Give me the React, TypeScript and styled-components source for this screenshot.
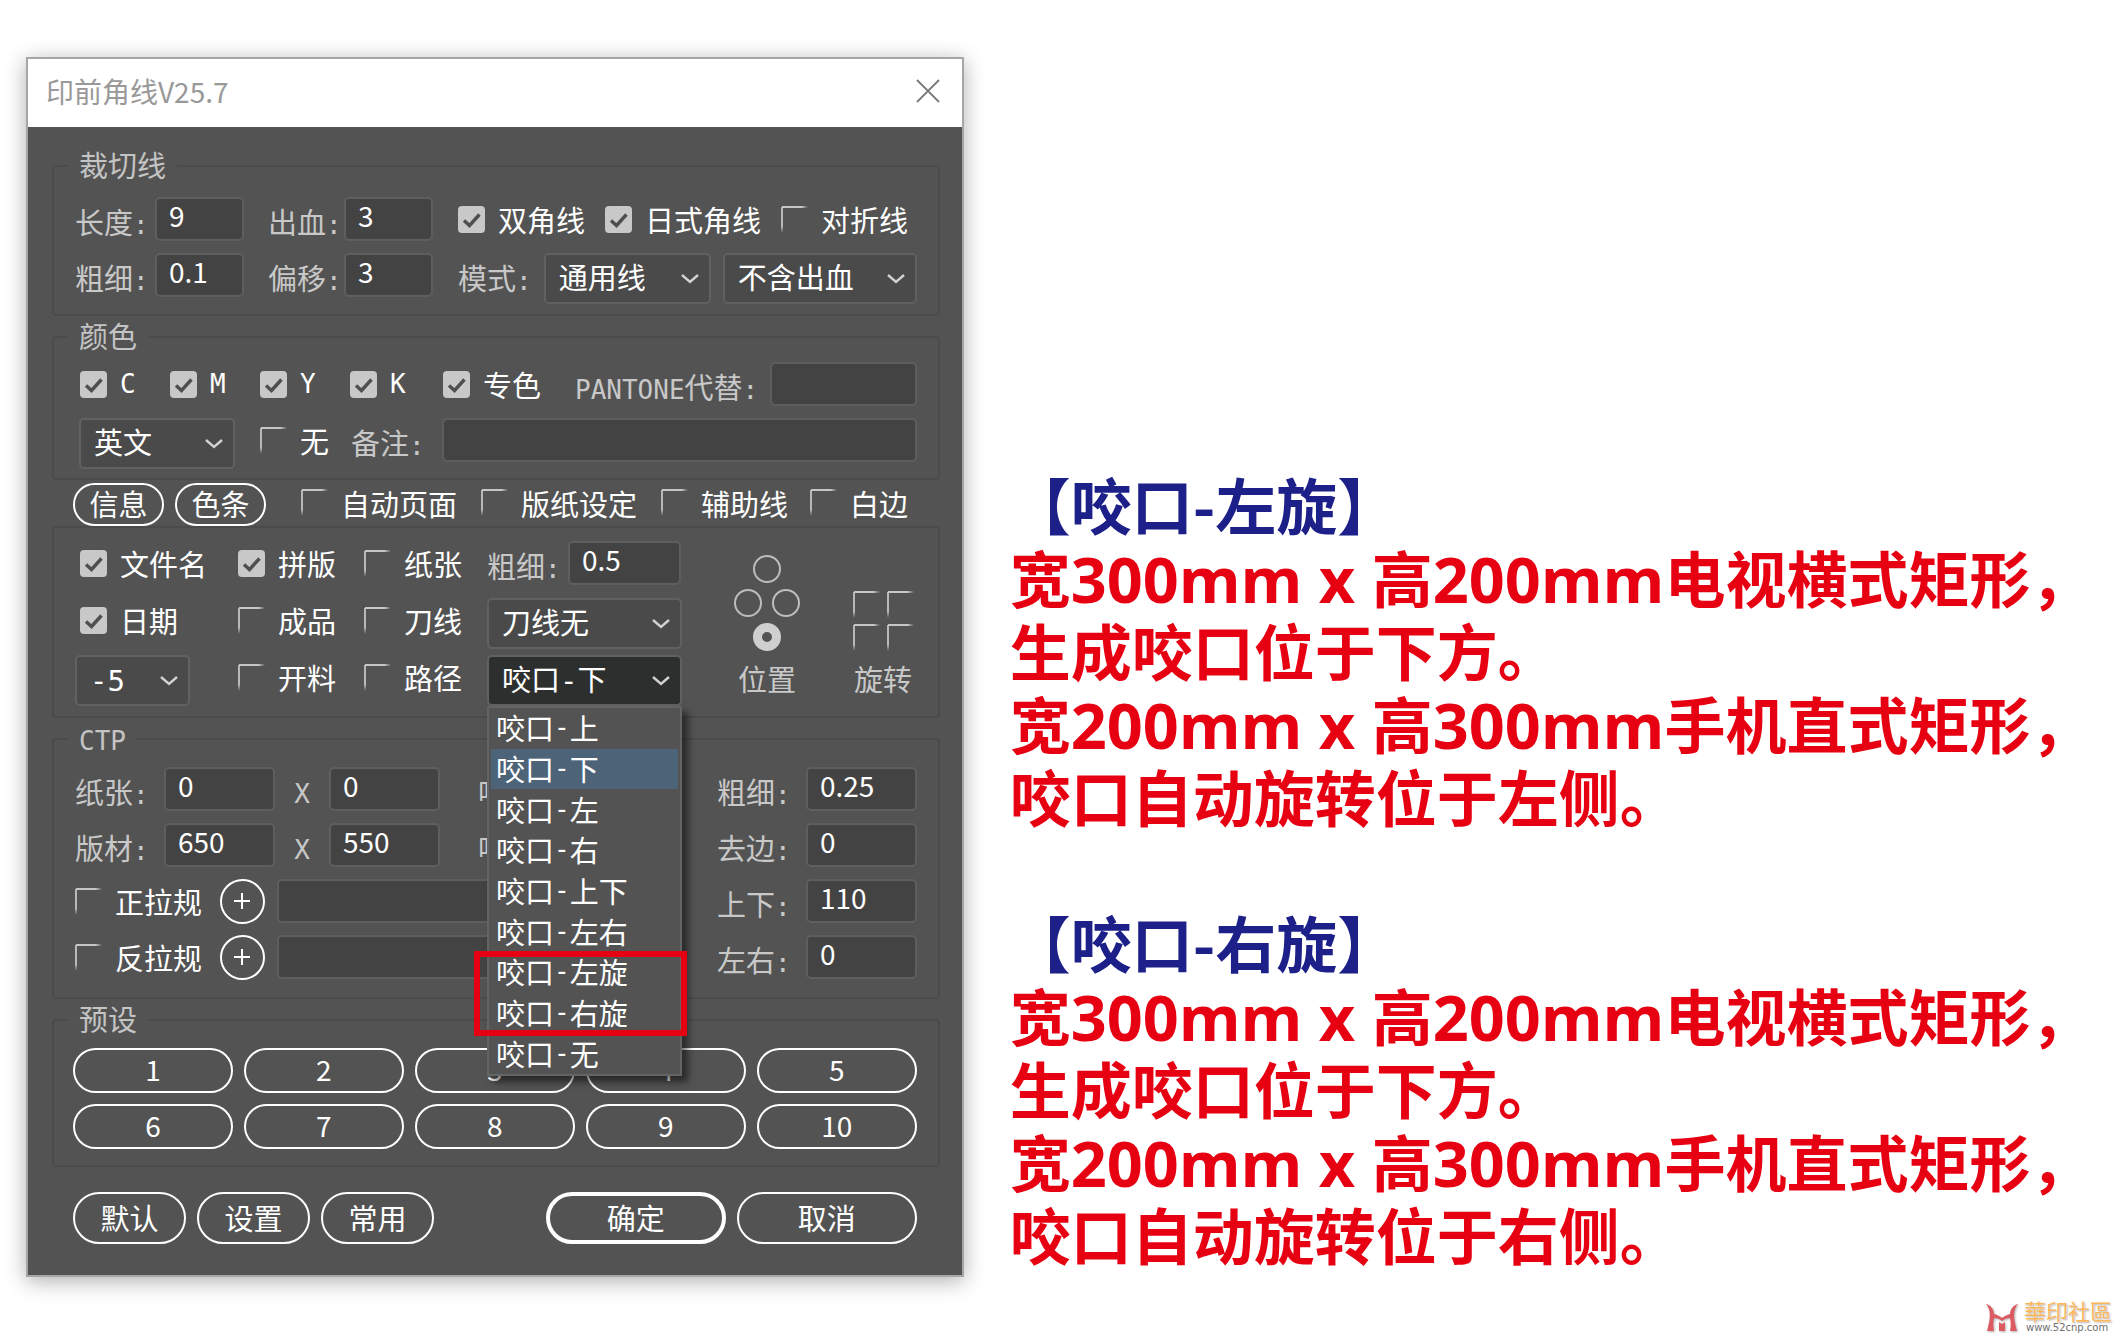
import React, { useId } from "react";
import styled, { createGlobalStyle, css } from "styled-components";

const cjk = `"Noto Sans CJK SC", "Noto Sans CJK TC", sans-serif`;
const monoCjk = `"DejaVu Sans Mono", "Noto Sans CJK SC", monospace`;

const GlobalStyle = createGlobalStyle`
  *, *::before, *::after { box-sizing: border-box; }
  body { margin: 0; background: #fff; }
  button, input, select { font: inherit; color: inherit; margin: 0; outline: none; }
`;

/* ---------- page ---------- */

const Page = styled.main`
  position: relative;
  display: flex;
  align-items: flex-start;
  gap: 46px;
  min-height: 100vh;
  padding: 57px 26px 0;
  font-family: ${cjk};
  overflow: hidden;
`;

const Dialog = styled.form`
  flex: 0 1 940px;
  border: 2px solid #a6a6a6;
  background: #535353;
  color: #fff;
  font-size: 29px;
  box-shadow: 0 4px 20px rgba(0, 0, 0, 0.32);
`;

const TitleBar = styled.header`
  display: flex;
  align-items: center;
  justify-content: space-between;
  height: 68px;
  padding: 0 22px 4px 18px;
  background: #fff;
  color: #999;
`;

const Title = styled.h1`
  margin: 0;
  font-size: 28px;
  font-weight: 400;
  line-height: 40px;
`;

const CloseButton = styled.button`
  display: grid;
  padding: 0;
  border: 0;
  background: none;
  color: #7a7a7a;
`;

const Body = styled.div`
  display: flex;
  flex-direction: column;
  padding: 24px 22px 31px 24px;
`;

/* ---------- groups and rows ---------- */

const Group = styled.fieldset<{ $top: number; $bottom: number; $gap?: number }>`
  min-width: 0;
  margin: 0 0 ${(p) => p.$gap ?? 6}px;
  padding: ${(p) => p.$top}px 21px ${(p) => p.$bottom}px 19px;
  border: 2px solid #4b4b4b;
  border-radius: 4px;
`;

const Legend = styled.legend`
  height: 30px;
  margin-left: -5px;
  padding: 0 11px;
  color: #c4c4c4;
  line-height: 26px;
`;

const Row = styled.div<{ $cols: string; $indent?: number }>`
  display: grid;
  grid-template-columns: ${(p) => p.$cols};
  align-items: start;
  height: 56px;
  padding-left: ${(p) => p.$indent ?? 2}px;
`;

const Inline = styled.div<{ $gap: number }>`
  display: flex;
  gap: ${(p) => p.$gap}px;
`;

const Caption = styled.label`
  height: 50px;
  color: #c8c8c8;
  line-height: 49px;
  white-space: nowrap;
`;

const Latin = styled.span`
  font-family: ${monoCjk};
  font-size: 26px;
  line-height: 1;
`;

const Times = styled(Latin)`
  color: #c8c8c8;
  line-height: 54px;
  text-align: center;
`;

/* ---------- controls ---------- */

const TextBox = styled.input`
  width: 100%;
  min-width: 0;
  height: 44px;
  padding: 0 12px 8px;
  border: 2px solid #5c5f5d;
  border-radius: 5px;
  background: #434343;
  font-size: 28px;
`;

const SelectWrap = styled.div<{ $width?: number }>`
  position: relative;
  display: grid;
  grid-template-columns: 1fr;
  align-items: center;
  width: ${(p) => (p.$width ? `${p.$width}px` : "100%")};

  > svg {
    grid-area: 1 / 1;
    justify-self: end;
    margin-right: 10px;
    pointer-events: none;
  }
`;

const SelectBox = styled.select<{ $open?: boolean }>`
  grid-area: 1 / 1;
  appearance: none;
  width: 100%;
  height: 51px;
  padding: 0 36px 0 13px;
  border: 2px solid #5f6260;
  border-radius: 5px;
  background: ${(p) => (p.$open ? "#2d2f2e" : "#4a4a4a")};
  font-family: ${monoCjk};
`;

const CheckLabel = styled.label`
  display: flex;
  align-items: center;
  gap: 13px;
  height: 44px;
  line-height: 30px;
  white-space: nowrap;
`;

const CheckCell = styled.span`
  display: grid;
  width: 27px;
  height: 27px;

  > * {
    grid-area: 1 / 1;
  }
  > svg {
    pointer-events: none;
  }
`;

const CheckInput = styled.input`
  appearance: none;
  width: 27px;
  height: 27px;
  background:
    linear-gradient(to right, #c6c6c6 75%, transparent) 1px 0 / 26px 2px no-repeat,
    linear-gradient(to bottom, #b8b8b8 75%, transparent) 0 1px / 2px 26px no-repeat;

  &:checked {
    border-radius: 4px;
    background: #c8c8c8;
  }
`;

const RadioInput = styled.input`
  appearance: none;
  width: 28px;
  height: 28px;
  border: 2px solid #bdbdbd;
  border-radius: 50%;

  &:checked {
    border: 9px solid #cfcfcf;
  }
`;

const PillButton = styled.button<{ $h: number; $w?: number; $strong?: boolean }>`
  display: flex;
  align-items: center;
  justify-content: center;
  width: ${(p) => (p.$w ? `${p.$w}px` : "100%")};
  height: ${(p) => p.$h}px;
  padding: 0 0 3px;
  border: ${(p) => (p.$strong ? 4 : 2)}px solid #fff;
  border-radius: 26px;
  background: none;
  line-height: 30px;
`;

const RoundButton = styled(PillButton)`
  padding: 0;
`;

/* ---------- option list ---------- */

const OptionList = styled.ul`
  position: absolute;
  z-index: 2;
  top: 100%;
  left: 0;
  display: flex;
  flex-direction: column;
  width: 100%;
  height: 370px;
  margin: 0;
  padding: 0;
  list-style: none;
  border: 2px solid #626564;
  background: #535353;
  box-shadow: 6px 6px 7px rgba(0, 0, 0, 0.5);
`;

const Option = styled.li<{ $active: boolean }>`
  flex: 1;
  display: flex;
  align-items: center;
  margin: 0 2px;
  padding: 0 0 2px 5px;
  line-height: 30px;
  ${(p) =>
    p.$active &&
    css`
      background: #4d6378;
    `}
`;

const Highlight = styled.li`
  position: absolute;
  top: 243px;
  left: -15px;
  width: 213px;
  height: 85px;
  border: 6px solid #e60012;
  pointer-events: none;
`;

/* ---------- layout parts ---------- */

const ToolRow = styled.div`
  display: grid;
  grid-template-columns: 102px 126px 180px 180px 149px 1fr;
  align-items: start;
  height: 43px;
  padding-left: 21px;

  > label {
    height: 39px;
  }
`;

const MarkLayout = styled.div`
  display: grid;
  grid-template-columns: 608px 172px 60px;
`;

const MarkRows = styled.div`
  display: grid;
  gap: 1px;
`;

const Cluster = styled.div`
  display: flex;
  flex-direction: column;
  align-items: center;
  justify-content: flex-end;
  gap: 6px;
  padding-bottom: 6px;
`;

const ClusterTitle = styled.span`
  margin-top: -6px;
  color: #c8c8c8;
  line-height: 54px;
`;

const Presets = styled.div`
  display: grid;
  grid-template-columns: repeat(5, 1fr);
  gap: 11px;
  font-size: 28px;
`;

const Footer = styled.footer`
  display: flex;
  gap: 11px;
  margin-top: 19px;
  padding: 0 23px 0 21px;
`;

const Spacer = styled.span`
  flex: 1;
`;

/* ---------- notes ---------- */

const Notes = styled.section`
  flex: 1;
  display: grid;
  gap: 73px;
  padding-top: 410px;
  font-size: 61px;
  font-weight: 700;
  line-height: 73px;
  white-space: nowrap;
`;

const NoteTitle = styled.h2`
  margin: 0;
  color: #1d2088;
  font-size: 61px;
  line-height: 73px;
`;

const NoteLine = styled.p`
  height: 73px;
  margin: 0;
  color: #e60012;
`;

const NoteLatin = styled.span`
  font-family: "Open Sans", "Noto Sans", sans-serif;
  font-size: 63px;
  line-height: 1;
`;

/* ---------- site mark ---------- */

const SiteMark = styled.a`
  position: absolute;
  right: 2px;
  bottom: 1px;
  display: flex;
  align-items: flex-end;
  gap: 3px;
  text-decoration: none;

  > svg {
    filter: drop-shadow(1px 1px 1px rgba(0, 0, 0, 0.3));
  }
`;

const SiteText = styled.span`
  display: grid;
`;

const SiteName = styled.span`
  color: #f9b65a;
  font-family: "Noto Sans CJK TC", sans-serif;
  font-size: 22px;
  line-height: 23px;
  text-shadow: 0 0 1px #fff, 1px 1px 2px rgba(0, 0, 0, 0.35);
`;

const SiteUrl = styled.span`
  padding-left: 2px;
  color: #6f6f6f;
  font-family: "DejaVu Sans", sans-serif;
  font-size: 10px;
  line-height: 12px;
`;

/* ---------- small components ---------- */

function Chevron() {
  return (
    <svg width="22" height="14" viewBox="0 0 22 14" fill="none" stroke="#d2d2d2" strokeWidth="2.4">
      <path d="M3 3 L11 10 L19 3" />
    </svg>
  );
}

function Plus() {
  return (
    <svg width="17" height="17" viewBox="0 0 17 17" stroke="#fff" strokeWidth="2">
      <path d="M8 0 V16 M0 8 H16" />
    </svg>
  );
}

function Check({ text, latin, checked }: { text: string; latin?: boolean; checked?: boolean }) {
  return (
    <CheckLabel>
      <CheckCell>
        <CheckInput type="checkbox" defaultChecked={checked} />
        {checked && (
          <svg width="27" height="27" viewBox="0 0 27 27" fill="none" stroke="#4f4f4f" strokeWidth="3.4">
            <path d="M6 14.5 L11.5 19.5 L21.5 8.5" />
          </svg>
        )}
      </CheckCell>
      {latin ? <Latin>{text}</Latin> : text}
    </CheckLabel>
  );
}

function Field({ text, latin, value = "" }: { text: string; latin?: string; value?: string }) {
  const id = useId();
  return (
    <>
      <Caption htmlFor={id}>
        {latin && <Latin>{latin}</Latin>}
        {text}
        <Latin>:</Latin>
      </Caption>
      <TextBox id={id} type="text" defaultValue={value} />
    </>
  );
}

function Select({
  name,
  options,
  width,
  open,
  id,
  children,
}: {
  name: string;
  options: string[];
  width?: number;
  open?: boolean;
  id?: string;
  children?: React.ReactNode;
}) {
  return (
    <SelectWrap $width={width}>
      <SelectBox id={id} aria-label={name} $open={open}>
        {options.map((o) => (
          <option key={o}>{o}</option>
        ))}
      </SelectBox>
      <Chevron />
      {children}
    </SelectWrap>
  );
}

const grips = ["上", "下", "左", "右", "上下", "左右", "左旋", "右旋", "无"];

function GripSelect() {
  return (
    <Select name="咬口" options={["咬口-下"]} width={195} open>
      <OptionList role="listbox" aria-label="咬口">
        {grips.map((g) => (
          <Option key={g} role="option" aria-selected={g === "下"} $active={g === "下"}>
            咬口<Latin>-</Latin>
            {g}
          </Option>
        ))}
        <Highlight role="presentation" />
      </OptionList>
    </Select>
  );
}

function Note({ turn, side }: { turn: string; side: string }) {
  return (
    <div>
      <NoteTitle>【咬口-{turn}】</NoteTitle>
      <NoteLine>
        宽<NoteLatin>300mm x </NoteLatin>高<NoteLatin>200mm</NoteLatin>电视横式矩形，
      </NoteLine>
      <NoteLine>生成咬口位于下方。</NoteLine>
      <NoteLine>
        宽<NoteLatin>200mm x </NoteLatin>高<NoteLatin>300mm</NoteLatin>手机直式矩形，
      </NoteLine>
      <NoteLine>咬口自动旋转位于{side}侧。</NoteLine>
    </div>
  );
}

const cutCols = "80px 89px 24px 76px 89px 25px 1fr";
const plateCols = "89px 111px 54px 111px 38px 67px 110px 62px 89px 1fr";
const gaugeCols = "145px 57px 380px 60px 89px 1fr";

export default function App() {
  const modeId = useId();
  return (
    <>
      <GlobalStyle />
      <Page>
        <Dialog onSubmit={(e) => e.preventDefault()}>
          <TitleBar>
            <Title>印前角线V25.7</Title>
            <CloseButton type="button" aria-label="关闭">
              <svg width="24" height="24" viewBox="0 0 24 24" stroke="currentColor" strokeWidth="1.8">
                <path d="M1 1 L23 23 M23 1 L1 23" />
              </svg>
            </CloseButton>
          </TitleBar>
          <Body>
            <Group $top={16} $bottom={5}>
              <Legend>裁切线</Legend>
              <Row $cols={cutCols}>
                <Field text="长度" value="9" />
                <span />
                <Field text="出血" value="3" />
                <span />
                <Inline $gap={20}>
                  <Check text="双角线" checked />
                  <Check text="日式角线" checked />
                  <Check text="对折线" />
                </Inline>
              </Row>
              <Row $cols={cutCols}>
                <Field text="粗细" value="0.1" />
                <span />
                <Field text="偏移" value="3" />
                <span />
                <Inline $gap={12}>
                  <Caption htmlFor={modeId}>
                    模式<Latin>:</Latin>
                  </Caption>
                  <Select id={modeId} name="模式" options={["通用线"]} width={167} />
                  <Select name="出血方式" options={["不含出血"]} width={194} />
                </Inline>
              </Row>
            </Group>

            <Group $top={10} $bottom={4} $gap={3}>
              <Legend>颜色</Legend>
              <Row $cols="90px 90px 90px 93px 132px 195px 1fr" $indent={7}>
                <Check text="C" latin checked />
                <Check text="M" latin checked />
                <Check text="Y" latin checked />
                <Check text="K" latin checked />
                <Check text="专色" checked />
                <Field latin="PANTONE" text="代替" />
              </Row>
              <Row $cols="181px 91px 91px 1fr" $indent={6}>
                <Select name="语言" options={["英文"]} width={156} />
                <Check text="无" />
                <Field text="备注" />
              </Row>
            </Group>

            <ToolRow>
              <PillButton type="button" $h={43} $w={91}>信息</PillButton>
              <PillButton type="button" $h={43} $w={91}>色条</PillButton>
              <Check text="自动页面" />
              <Check text="版纸设定" />
              <Check text="辅助线" />
              <Check text="白边" />
            </ToolRow>

            <Group $top={13} $bottom={5} aria-label="标记">
              <MarkLayout>
                <MarkRows>
                  <Row $cols="158px 126px 123px 81px 113px" $indent={7}>
                    <Check text="文件名" checked />
                    <Check text="拼版" checked />
                    <Check text="纸张" />
                    <Field text="粗细" value="0.5" />
                  </Row>
                  <Row $cols="158px 126px 123px 195px" $indent={7}>
                    <Check text="日期" checked />
                    <Check text="成品" />
                    <Check text="刀线" />
                    <Select name="刀线" options={["刀线无"]} width={195} />
                  </Row>
                  <Row $cols="163px 126px 123px 195px">
                    <Select name="偏移值" options={["-5"]} width={115} />
                    <Check text="开料" />
                    <Check text="路径" />
                    <GripSelect />
                  </Row>
                </MarkRows>
                <Cluster role="radiogroup" aria-label="位置">
                  <RadioInput type="radio" name="place" aria-label="上" />
                  <Inline $gap={10}>
                    <RadioInput type="radio" name="place" aria-label="左" />
                    <RadioInput type="radio" name="place" aria-label="右" />
                  </Inline>
                  <RadioInput type="radio" name="place" aria-label="下" defaultChecked />
                  <ClusterTitle>位置</ClusterTitle>
                </Cluster>
                <Cluster role="group" aria-label="旋转">
                  <Inline $gap={7}>
                    <CheckInput type="checkbox" aria-label="左上" />
                    <CheckInput type="checkbox" aria-label="右上" />
                  </Inline>
                  <Inline $gap={7}>
                    <CheckInput type="checkbox" aria-label="左下" />
                    <CheckInput type="checkbox" aria-label="右下" />
                  </Inline>
                  <ClusterTitle>旋转</ClusterTitle>
                </Cluster>
              </MarkLayout>
            </Group>

            <Group $top={13} $bottom={6}>
              <Legend>
                <Latin>CTP</Latin>
              </Legend>
              <Row $cols={plateCols}>
                <Field text="纸张" value="0" />
                <Times>X</Times>
                <TextBox type="text" aria-label="纸张高度" defaultValue="0" />
                <span />
                <Field text="咬口" />
                <span />
                <Field text="粗细" value="0.25" />
              </Row>
              <Row $cols={plateCols}>
                <Field text="版材" value="650" />
                <Times>X</Times>
                <TextBox type="text" aria-label="版材高度" defaultValue="550" />
                <span />
                <Field text="咬口" />
                <span />
                <Field text="去边" value="0" />
              </Row>
              <Row $cols={gaugeCols}>
                <Check text="正拉规" />
                <RoundButton type="button" $h={45} $w={45} aria-label="添加正拉规">
                  <Plus />
                </RoundButton>
                <TextBox type="text" aria-label="正拉规" />
                <span />
                <Field text="上下" value="110" />
              </Row>
              <Row $cols={gaugeCols}>
                <Check text="反拉规" />
                <RoundButton type="button" $h={45} $w={45} aria-label="添加反拉规">
                  <Plus />
                </RoundButton>
                <TextBox type="text" aria-label="反拉规" />
                <span />
                <Field text="左右" value="0" />
              </Row>
            </Group>

            <Group $top={13} $bottom={16}>
              <Legend>预设</Legend>
              <Presets>
                {Array.from({ length: 10 }, (_, i) => (
                  <PillButton key={i} type="button" $h={45}>
                    {i + 1}
                  </PillButton>
                ))}
              </Presets>
            </Group>

            <Footer>
              <PillButton type="button" $h={52} $w={113}>默认</PillButton>
              <PillButton type="button" $h={52} $w={113}>设置</PillButton>
              <PillButton type="button" $h={52} $w={113}>常用</PillButton>
              <Spacer />
              <PillButton type="submit" $h={52} $w={180} $strong>确定</PillButton>
              <PillButton type="button" $h={52} $w={180}>取消</PillButton>
            </Footer>
          </Body>
        </Dialog>

        <Notes>
          <Note turn="左旋" side="左" />
          <Note turn="右旋" side="右" />
        </Notes>

        <SiteMark href="#">
          <svg width="37" height="33" viewBox="0 0 37 33">
            <path
              d="M2 3 C7 4 10 9 10 13 C13 14 16 15 18 17 C20 15 23 14 26 13 C26 9 29 4 34 3 C29 9 29 16 33 30 L26 30 C27 25 27 21 26 17 C23 17 20 18 18 20 C16 18 13 17 10 17 C9 21 9 25 10 30 L3 30 C7 16 7 9 2 3 Z"
              fill="#dc5a62"
            />
            <path d="M15 21 L18 23 L21 21 V30 H15 Z" fill="#dc5a62" />
          </svg>
          <SiteText>
            <SiteName>華印社區</SiteName>
            <SiteUrl>www.52cnp.com</SiteUrl>
          </SiteText>
        </SiteMark>
      </Page>
    </>
  );
}
